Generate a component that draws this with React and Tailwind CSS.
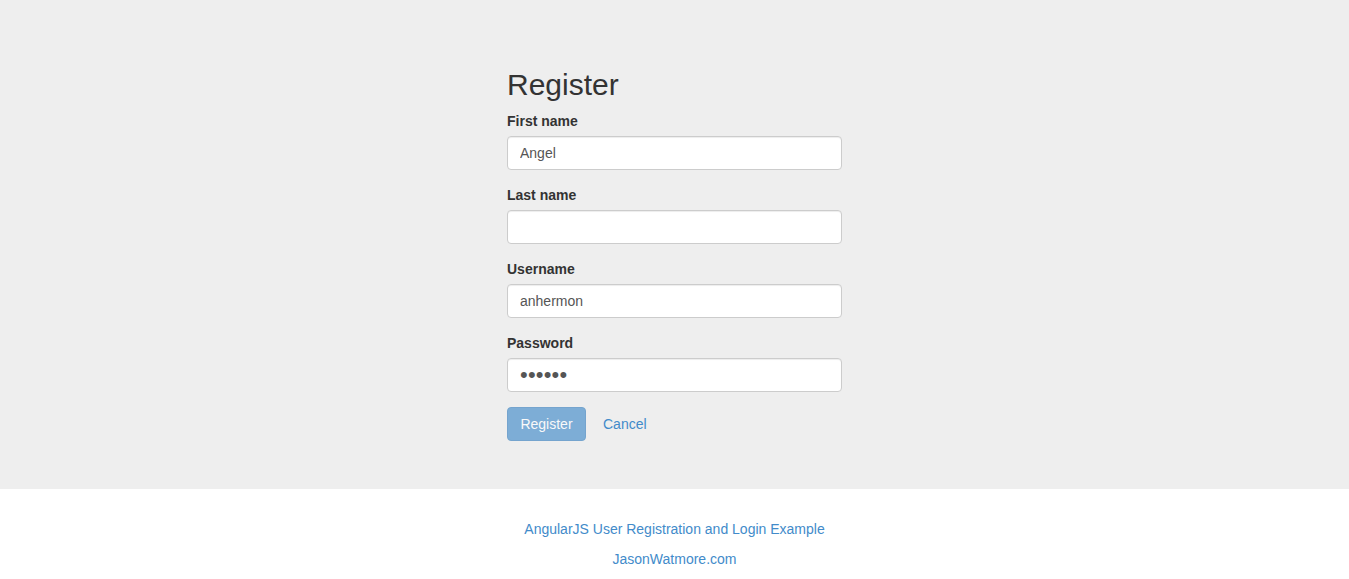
import React from 'react';

const Field = ({ label, type = 'text', value = '' }) => (
  <div className="mb-[15px]">
    <label className="block text-sm leading-5 font-bold mb-[5px] text-[#333]">{label}</label>
    <input
      type={type}
      defaultValue={value}
      className={`block w-full h-[34px] px-3 py-0 text-[#555] bg-white border border-[#ccc] rounded-[4px] shadow-[inset_0_1px_1px_rgba(0,0,0,0.075)] outline-none ${type === 'password' ? 'text-[22px] tracking-[0.2px]' : 'text-sm'}`}
    />
  </div>
);

export default function App() {
  return (
    <div className="min-h-[579px] bg-white text-[#333] text-sm leading-5 font-['Liberation_Sans',Arial,sans-serif]">
      <div className="bg-[#eee] pt-[48px] pb-[48px]">
        <div className="w-[335px] mx-auto">
          <h2 className="text-[30px] leading-[33px] mt-5 mb-2.5 font-medium text-[#333]">Register</h2>
          <form onSubmit={(e) => e.preventDefault()}>
            <Field label="First name" value="Angel" />
            <Field label="Last name" />
            <Field label="Username" value="anhermon" />
            <Field label="Password" type="password" value="123456" />
            <div className="flex items-center">
              <button
                type="submit"
                className="w-[79px] h-[34px] text-sm text-white bg-[#428bca] border border-[#357ebd] rounded-[4px] opacity-65 cursor-not-allowed"
              >
                Register
              </button>
              <a href="#" className="ml-[5px] px-3 h-[34px] leading-[34px] text-[#428bca]">Cancel</a>
            </div>
          </form>
        </div>
      </div>
      <div className="pt-[30px] text-center">
        <p className="mb-2.5"><a href="#" className="text-[#428bca]">AngularJS User Registration and Login Example</a></p>
        <p className="mb-2.5"><a href="#" className="text-[#428bca]">JasonWatmore.com</a></p>
      </div>
    </div>
  );
}
